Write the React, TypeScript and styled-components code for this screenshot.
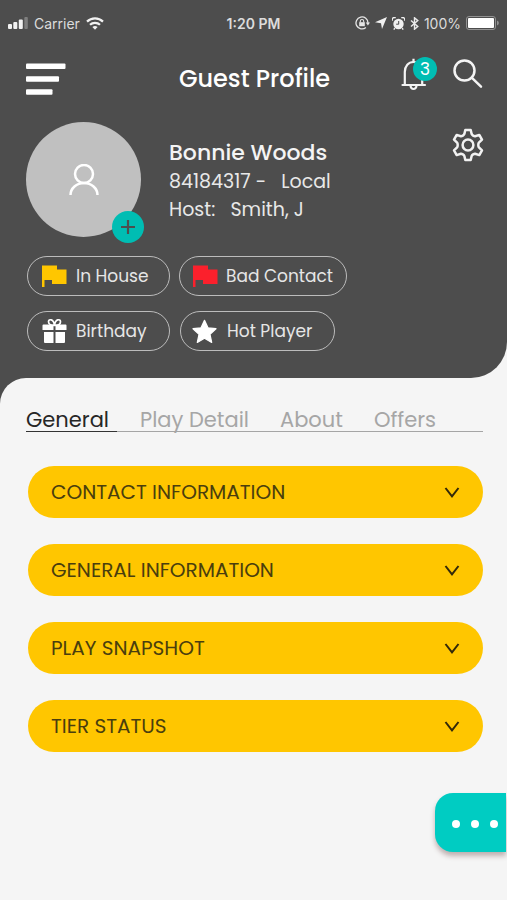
import React from "react";
import styled, { createGlobalStyle } from "styled-components";

const color = {
  dark: "#4d4d4d",
  light: "#f5f5f5",
  yellow: "#ffc600",
  red: "#fb202c",
  teal: "#00bdb3",
  tealBright: "#00ccc2",
};

const GlobalStyle = createGlobalStyle`
  * { box-sizing: border-box; }
  body {
    margin: 0;
    background: ${color.light};
    font-family: Poppins, Inter, "Open Sans", sans-serif;
  }
  button {
    padding: 0;
    border: 0;
    background: none;
    color: inherit;
    font: inherit;
    cursor: pointer;
  }
  svg { display: block; flex: none; }
  h1, h2, p { margin: 0; }
`;

const Page = styled.div`
  min-height: 100vh;
  background: ${color.light};
`;

const Header = styled.header`
  padding-bottom: 27px;
  border-bottom-right-radius: 36px;
  background: ${color.dark};
  color: #fff;
`;

const StatusBar = styled.div`
  display: grid;
  grid-template-columns: 1fr auto 1fr;
  align-items: center;
  height: 46px;
  padding: 0 8px;
  color: #dcdcdc;
  font-family: Inter, sans-serif;
  font-size: 14px;
`;

const StatusGroup = styled.div<{ $end?: boolean }>`
  display: flex;
  align-items: center;
  justify-content: ${(p) => (p.$end ? "flex-end" : "flex-start")};
  gap: ${(p) => (p.$end ? 5 : 6)}px;
`;

const Clock = styled.time`
  font-size: 14px;
  font-weight: 600;
`;

const TitleBar = styled.div`
  display: grid;
  grid-template-columns: 1fr auto 1fr;
  align-items: center;
  height: 66px;
  padding: 0 24px 0 26px;
`;

const Title = styled.h1`
  font-size: 24px;
  font-weight: 500;
  line-height: 32px;
`;

const Actions = styled.div`
  display: flex;
  align-items: center;
  justify-content: flex-end;
  gap: 26px;
  padding-bottom: 10px;
`;

const IconButton = styled.button`
  position: relative;
  display: block;
  justify-self: start;
`;

const CountBadge = styled.span`
  position: absolute;
  top: -1px;
  left: 12px;
  width: 24px;
  height: 24px;
  border-radius: 50%;
  background: ${color.teal};
  font-size: 17px;
  line-height: 24px;
  text-align: center;
`;

const Profile = styled.section`
  display: flex;
  align-items: flex-start;
  gap: 28px;
  padding: 10px 23px 0 26px;
`;

const Avatar = styled.div`
  position: relative;
  display: flex;
  align-items: center;
  justify-content: center;
  width: 115px;
  height: 115px;
  border-radius: 50%;
  background: #c0c0c0;
`;

const AddButton = styled.button`
  position: absolute;
  right: -3px;
  bottom: -6px;
  display: flex;
  align-items: center;
  justify-content: center;
  width: 32px;
  height: 32px;
  border-radius: 50%;
  background: ${color.teal};
  color: ${color.dark};
`;

const Details = styled.div`
  flex: 1;
  padding-top: 16px;
  color: #e8e8e8;
  font-size: 19px;
  line-height: 28px;
  white-space: pre;
`;

const Name = styled.h2`
  color: #f4f4f4;
  font-size: 22px;
  font-weight: 500;
  line-height: 30px;
`;

const SettingsButton = styled(IconButton)`
  padding-top: 6px;
`;

const Chips = styled.div`
  display: flex;
  flex-direction: column;
  gap: 15px;
  padding: 19px 24px 0 27px;
`;

const ChipRow = styled.div<{ $gap: number }>`
  display: flex;
  gap: ${(p) => p.$gap}px;
`;

const Chip = styled.span<{ $width: number; $start: number; $gap: number }>`
  display: flex;
  align-items: center;
  gap: ${(p) => p.$gap}px;
  width: ${(p) => p.$width}px;
  height: 40px;
  padding-left: ${(p) => p.$start}px;
  border: 1px solid #bcbcbc;
  border-radius: 20px;
  color: #e6e6e6;
  font-size: 17px;
  white-space: nowrap;
`;

const PanelBackdrop = styled.main`
  background: linear-gradient(${color.dark}, ${color.dark}) top left / 50% 40px no-repeat;
`;

const Panel = styled.div`
  padding: 31px 24px 48px 26px;
  border-top-left-radius: 26px;
  background: ${color.light};
`;

const Tabs = styled.div`
  display: flex;
  gap: 23px;
  box-shadow: inset 0 -1px #a5a5a5;
`;

const Tab = styled.button<{ $active?: boolean }>`
  height: 23px;
  padding-right: 8px;
  border-bottom: ${(p) => (p.$active ? "1px solid #333" : "1px solid transparent")};
  color: ${(p) => (p.$active ? "#262626" : "#a6a6a6")};
  font-size: 21px;
  line-height: 22px;
  text-align: left;
`;

const Sections = styled.div`
  display: flex;
  flex-direction: column;
  gap: 26px;
  padding: 34px 0 0 2px;
`;

const SectionButton = styled.button`
  display: flex;
  align-items: center;
  justify-content: space-between;
  height: 52px;
  padding: 0 23px;
  border-radius: 26px;
  background: ${color.yellow};
  color: #4a3e0e;
  font-size: 20px;
`;

const ChatButton = styled.button`
  position: fixed;
  right: 1px;
  bottom: 48px;
  display: flex;
  align-items: center;
  justify-content: flex-end;
  gap: 11px;
  width: 71px;
  height: 59px;
  padding: 2px 8px 0 0;
  border-radius: 18px 0 0 18px;
  background: ${color.tealBright};
  box-shadow: 0 4px 5px rgba(90, 50, 50, 0.35);
`;

const Dot = styled.span`
  width: 8px;
  height: 8px;
  border-radius: 50%;
  background: #fff;
`;

const SignalIcon = () => (
  <svg width="20" height="12" viewBox="0 0 20 12" fill="#f2f2f2">
    <rect x="0" y="7" width="4" height="5" rx="1" />
    <rect x="5.3" y="5" width="4" height="7" rx="1" />
    <rect x="10.8" y="2.5" width="4" height="9.5" rx="1" />
    <rect x="16.3" y="0" width="3.5" height="12" rx="1" opacity=".3" />
  </svg>
);

const WifiIcon = () => (
  <svg width="18" height="13" viewBox="0 0 18 13" fill="none" stroke="#f2f2f2" strokeWidth="2.2">
    <path d="M1 4.6a11.5 11.5 0 0 1 16 0" />
    <path d="M4 7.8a7.2 7.2 0 0 1 10 0" />
    <path d="M6.4 10.1a3.8 3.8 0 0 1 5.2 0L9 12.8z" fill="#f2f2f2" stroke="none" />
  </svg>
);

const RotationLockIcon = () => (
  <svg width="15" height="14" viewBox="0 0 15 14" fill="none" stroke="#e6e6e6">
    <path d="M10.9 11.5A6 6 0 1 1 13 7" strokeWidth="1.3" />
    <path d="M10.8 6.5h4.2L12.9 9.5z" fill="#e6e6e6" stroke="none" />
    <rect x="4.2" y="6.2" width="5.6" height="4" fill="#e6e6e6" stroke="none" />
    <path d="M5.3 6.4V5.2a1.7 1.7 0 0 1 3.4 0v1.2" strokeWidth="1.1" />
  </svg>
);

const LocationIcon = () => (
  <svg width="12" height="12" viewBox="0 0 12 12" fill="#f0f0f0">
    <path d="M12 0 7 12 6 6.2 0 5.3z" />
  </svg>
);

const AlarmIcon = () => (
  <svg width="13" height="13" viewBox="0 0 13 13" fill="#f0f0f0">
    <circle cx="6.5" cy="7" r="5.2" />
    <path d="M.6 3.6A2 2 0 0 1 3.6 1M12.4 3.6A2 2 0 0 0 9.4 1M2.8 11.2l-1 1.4M10.2 11.2l1 1.4" stroke="#f0f0f0" strokeWidth="1.4" fill="none" />
    <path d="M6.7 4v3.2H4.2" stroke={color.dark} fill="none" />
  </svg>
);

const BluetoothIcon = () => (
  <svg width="9" height="13" viewBox="0 0 9 13" fill="none" stroke="#eaeaea" strokeWidth="1.4">
    <path d="m1 3.4 6.8 6L4.5 12.2V.8l3.3 2.8L1 9.6" />
  </svg>
);

const BatteryIcon = () => (
  <svg width="33" height="14" viewBox="0 0 33 14">
    <rect x=".5" y=".5" width="29" height="13" rx="2.5" fill="none" stroke="#929292" />
    <rect x="2" y="2" width="26" height="10" rx="1" fill="#fff" />
    <path d="M31 4.5a2.6 2.6 0 0 1 0 5z" fill="#929292" />
  </svg>
);

const MenuIcon = () => (
  <svg width="40" height="32" viewBox="0 0 40 32" fill="#fff">
    <rect y=".5" width="39.5" height="5.5" rx="1" />
    <rect y="13.3" width="33" height="5.5" rx="1" />
    <rect y="26.2" width="26.5" height="5.5" rx="1" />
  </svg>
);

const BellIcon = () => (
  <svg width="26" height="33" viewBox="0 0 26 33" fill="none" stroke="#f4f4f4" strokeWidth="2.2">
    <path d="M1.5 27h22.500" strokeLinecap="round" />
    <path d="M3.800 27V14C3.800 8 7.500 4 12.500 4S21.200 8 21.200 14V27" />
    <path d="M12.500 4V.8M9.500 27.500a3 3.500 0 0 0 6 0" />
  </svg>
);

const SearchIcon = () => (
  <svg width="30" height="30" viewBox="0 0 30 30" fill="none" stroke="#f4f4f4" strokeWidth="2.500">
    <circle cx="11.500" cy="11.500" r="10" />
    <path d="m18.700 18.700 9.300 9" strokeLinecap="round" />
  </svg>
);

const GearIcon = () => (
  <svg width="32" height="34" viewBox="0 0 32 34" fill="none" stroke="#f2f2f2" strokeWidth="2.500" strokeLinejoin="round">
    <path d="M13.300 2h5.400l1 4.200c.3.900 2.400 2.200 3.400 2l4.200-1.300 2.700 4.700-3.100 3c-.8.800-.8 4 0 4.800l3.100 3-2.700 4.700-4.200-1.300c-1-.2-3.100 1.100-3.400 2l-1 4.200h-5.400l-1-4.200c-.3-.9-2.400-2.200-3.400-2l-4.200 1.300L2 22.400l3.100-3c.8-.8.800-4 0-4.800l-3.100-3 2.700-4.700 4.200 1.300c1 .2 3.100-1.100 3.400-2z" />
    <circle cx="16" cy="17" r="5.400" />
  </svg>
);

const UserIcon = () => (
  <svg width="30" height="32" viewBox="0 0 30 32" fill="none" stroke="#fff" strokeWidth="2.500">
    <circle cx="15" cy="10" r="9" />
    <path d="M1.500 31a13.500 12 0 0 1 27 0" />
  </svg>
);

const PlusIcon = () => (
  <svg width="14" height="14" viewBox="0 0 14 14" stroke="currentColor" strokeWidth="2.200">
    <path d="M7 0v14M0 7h14" />
  </svg>
);

const FlagIcon = ({ fill }: { fill: string }) => (
  <svg width="25" height="22" viewBox="0 0 25 22" fill={fill}>
    <path d="M0 .5h15v4H24.500V19H10v-4H2.500v7H0z" />
  </svg>
);

const GiftIcon = () => (
  <svg width="25" height="26" viewBox="0 0 25 26" fill="#fff">
    <path d="M1.500 6.500h22a1 1 0 0 1 1 1V12h-11V7h-2v5H.5V7.500a1 1 0 0 1 1-1zM2 14h9.500v11H3a1 1 0 0 1-1-1zM13.500 14H23v10a1 1 0 0 1-1 1h-8.500z" />
    <path d="M12.500 7.500C9 7.500 6.500 6 6.500 3.800c0-3.300 5.300-3 6 3.700zM12.500 7.500C16 7.500 18.500 6 18.500 3.800c0-3.300-5.300-3-6 3.700z" fill="none" stroke="#fff" strokeWidth="1.700" />
  </svg>
);

const StarIcon = () => (
  <svg width="25" height="25" viewBox="0 0 25 25" fill="#fff" stroke="#fff" strokeWidth="1.200" strokeLinejoin="round">
    <path d="m12.500 1.300 3.500 7.500 8 .900-6 5.600 1.700 8.100-7.200-4.100-7.200 4.100L7 15.300 1 9.700l8-.9z" />
  </svg>
);

const ChevronIcon = () => (
  <svg width="16" height="11" viewBox="0 0 16 11" fill="none" stroke="#33290a" strokeWidth="2">
    <path d="m1.500 1 6.500 8.300L14.500 1" />
  </svg>
);

const tabs = ["General", "Play Detail", "About", "Offers"];
const sections = ["CONTACT INFORMATION", "GENERAL INFORMATION", "PLAY SNAPSHOT", "TIER STATUS"];

export default function App() {
  const [active, setActive] = React.useState("General");
  return (
    <Page>
      <GlobalStyle />
      <Header>
        <StatusBar>
          <StatusGroup>
            <SignalIcon />
            <span>Carrier</span>
            <WifiIcon />
          </StatusGroup>
          <Clock>1:20 PM</Clock>
          <StatusGroup $end>
            <RotationLockIcon />
            <LocationIcon />
            <AlarmIcon />
            <BluetoothIcon />
            <span>100%</span>
            <BatteryIcon />
          </StatusGroup>
        </StatusBar>
        <TitleBar>
          <IconButton aria-label="Menu">
            <MenuIcon />
          </IconButton>
          <Title>Guest Profile</Title>
          <Actions>
            <IconButton aria-label="Notifications">
              <BellIcon />
              <CountBadge>3</CountBadge>
            </IconButton>
            <IconButton aria-label="Search">
              <SearchIcon />
            </IconButton>
          </Actions>
        </TitleBar>
        <Profile>
          <Avatar>
            <UserIcon />
            <AddButton aria-label="Add photo">
              <PlusIcon />
            </AddButton>
          </Avatar>
          <Details>
            <Name>Bonnie Woods</Name>
            <p>{"84184317 -   Local"}</p>
            <p>{"Host:   Smith, J"}</p>
          </Details>
          <SettingsButton aria-label="Settings">
            <GearIcon />
          </SettingsButton>
        </Profile>
        <Chips>
          <ChipRow $gap={9}>
            <Chip $width={143} $start={14} $gap={9}>
              <FlagIcon fill={color.yellow} />
              In House
            </Chip>
            <Chip $width={168} $start={13} $gap={8}>
              <FlagIcon fill={color.red} />
              Bad Contact
            </Chip>
          </ChipRow>
          <ChipRow $gap={10}>
            <Chip $width={143} $start={14} $gap={9}>
              <GiftIcon />
              Birthday
            </Chip>
            <Chip $width={155} $start={11} $gap={10}>
              <StarIcon />
              Hot Player
            </Chip>
          </ChipRow>
        </Chips>
      </Header>
      <PanelBackdrop>
        <Panel>
          <Tabs role="tablist">
            {tabs.map((tab) => (
              <Tab key={tab} role="tab" aria-selected={tab === active} $active={tab === active} onClick={() => setActive(tab)}>
                {tab}
              </Tab>
            ))}
          </Tabs>
          <Sections>
            {sections.map((section) => (
              <SectionButton key={section} aria-expanded={false}>
                {section}
                <ChevronIcon />
              </SectionButton>
            ))}
          </Sections>
        </Panel>
      </PanelBackdrop>
      <ChatButton aria-label="Messages">
        <Dot />
        <Dot />
        <Dot />
      </ChatButton>
    </Page>
  );
}
